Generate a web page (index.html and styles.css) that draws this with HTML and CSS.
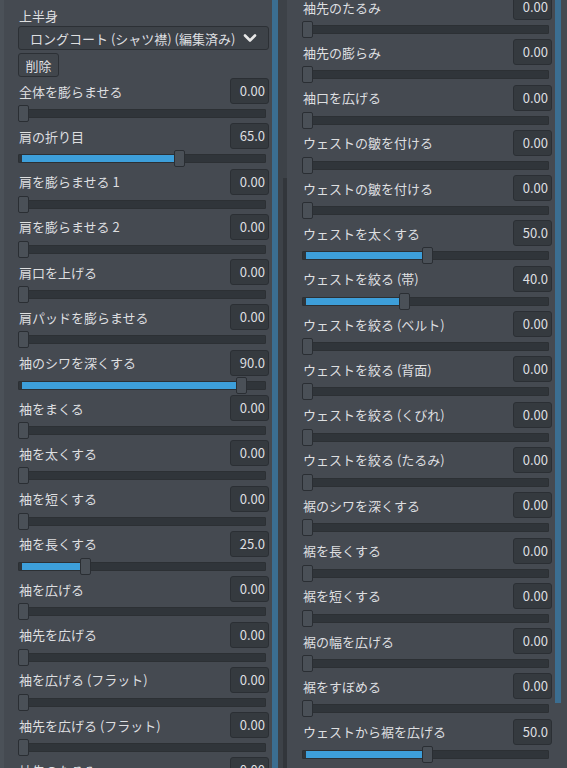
FILE: index.html
```html
<!DOCTYPE html>
<html lang="ja">
<head>
<meta charset="utf-8">
<link rel="stylesheet" href="styles.css">
</head>
<body>
<div class="app">
  <div class="edge"></div>
  <div class="panel left">
    <div class="section-title">上半身</div>
    <div class="dropdown"><span>ロングコート (シャツ襟) (編集済み)</span>
      <svg class="chev" width="14" height="10" viewBox="0 0 14 10"><path d="M2 2.5 L7 7.5 L12 2.5" fill="none" stroke="#e8e8e8" stroke-width="2.6" stroke-linecap="round" stroke-linejoin="round"/></svg>
    </div>
    <div class="btn">削除</div>
    <div class="rows">
      <div class="row"><div class="head"><span class="label">全体を膨らませる</span><span class="val">0.00</span></div><div class="slider"><div class="track"></div><div class="handle" style="--p:0"></div></div></div>
      <div class="row"><div class="head"><span class="label">肩の折り目</span><span class="val">65.0</span></div><div class="slider"><div class="track"></div><div class="fill" style="--p:0.66"></div><div class="handle" style="--p:0.66"></div></div></div>
      <div class="row"><div class="head"><span class="label">肩を膨らませる 1</span><span class="val">0.00</span></div><div class="slider"><div class="track"></div><div class="handle" style="--p:0"></div></div></div>
      <div class="row"><div class="head"><span class="label">肩を膨らませる 2</span><span class="val">0.00</span></div><div class="slider"><div class="track"></div><div class="handle" style="--p:0"></div></div></div>
      <div class="row"><div class="head"><span class="label">肩口を上げる</span><span class="val">0.00</span></div><div class="slider"><div class="track"></div><div class="handle" style="--p:0"></div></div></div>
      <div class="row"><div class="head"><span class="label">肩パッドを膨らませる</span><span class="val">0.00</span></div><div class="slider"><div class="track"></div><div class="handle" style="--p:0"></div></div></div>
      <div class="row"><div class="head"><span class="label">袖のシワを深くする</span><span class="val">90.0</span></div><div class="slider"><div class="track"></div><div class="fill" style="--p:0.92"></div><div class="handle" style="--p:0.92"></div></div></div>
      <div class="row"><div class="head"><span class="label">袖をまくる</span><span class="val">0.00</span></div><div class="slider"><div class="track"></div><div class="handle" style="--p:0"></div></div></div>
      <div class="row"><div class="head"><span class="label">袖を太くする</span><span class="val">0.00</span></div><div class="slider"><div class="track"></div><div class="handle" style="--p:0"></div></div></div>
      <div class="row"><div class="head"><span class="label">袖を短くする</span><span class="val">0.00</span></div><div class="slider"><div class="track"></div><div class="handle" style="--p:0"></div></div></div>
      <div class="row"><div class="head"><span class="label">袖を長くする</span><span class="val">25.0</span></div><div class="slider"><div class="track"></div><div class="fill" style="--p:0.26"></div><div class="handle" style="--p:0.26"></div></div></div>
      <div class="row"><div class="head"><span class="label">袖を広げる</span><span class="val">0.00</span></div><div class="slider"><div class="track"></div><div class="handle" style="--p:0"></div></div></div>
      <div class="row"><div class="head"><span class="label">袖先を広げる</span><span class="val">0.00</span></div><div class="slider"><div class="track"></div><div class="handle" style="--p:0"></div></div></div>
      <div class="row"><div class="head"><span class="label">袖を広げる (フラット)</span><span class="val">0.00</span></div><div class="slider"><div class="track"></div><div class="handle" style="--p:0"></div></div></div>
      <div class="row"><div class="head"><span class="label">袖先を広げる (フラット)</span><span class="val">0.00</span></div><div class="slider"><div class="track"></div><div class="handle" style="--p:0"></div></div></div>
      <div class="row"><div class="head"><span class="label">袖先のたるみ</span><span class="val">0.00</span></div><div class="slider"><div class="track"></div><div class="handle" style="--p:0"></div></div></div>
    </div>
  </div>
  <div class="vbar full"></div>
  <div class="gutter"><div class="thumb"></div></div>
  <div class="panel right">
    <div class="rows">
      <div class="row"><div class="head"><span class="label">袖先のたるみ</span><span class="val">0.00</span></div><div class="slider"><div class="track"></div><div class="handle" style="--p:0"></div></div></div>
      <div class="row"><div class="head"><span class="label">袖先の膨らみ</span><span class="val">0.00</span></div><div class="slider"><div class="track"></div><div class="handle" style="--p:0"></div></div></div>
      <div class="row"><div class="head"><span class="label">袖口を広げる</span><span class="val">0.00</span></div><div class="slider"><div class="track"></div><div class="handle" style="--p:0"></div></div></div>
      <div class="row"><div class="head"><span class="label">ウェストの皺を付ける</span><span class="val">0.00</span></div><div class="slider"><div class="track"></div><div class="handle" style="--p:0"></div></div></div>
      <div class="row"><div class="head"><span class="label">ウェストの皺を付ける</span><span class="val">0.00</span></div><div class="slider"><div class="track"></div><div class="handle" style="--p:0"></div></div></div>
      <div class="row"><div class="head"><span class="label">ウェストを太くする</span><span class="val">50.0</span></div><div class="slider"><div class="track"></div><div class="fill" style="--p:0.51"></div><div class="handle" style="--p:0.51"></div></div></div>
      <div class="row"><div class="head"><span class="label">ウェストを絞る (帯)</span><span class="val">40.0</span></div><div class="slider"><div class="track"></div><div class="fill" style="--p:0.41"></div><div class="handle" style="--p:0.41"></div></div></div>
      <div class="row"><div class="head"><span class="label">ウェストを絞る (ベルト)</span><span class="val">0.00</span></div><div class="slider"><div class="track"></div><div class="handle" style="--p:0"></div></div></div>
      <div class="row"><div class="head"><span class="label">ウェストを絞る (背面)</span><span class="val">0.00</span></div><div class="slider"><div class="track"></div><div class="handle" style="--p:0"></div></div></div>
      <div class="row"><div class="head"><span class="label">ウェストを絞る (くびれ)</span><span class="val">0.00</span></div><div class="slider"><div class="track"></div><div class="handle" style="--p:0"></div></div></div>
      <div class="row"><div class="head"><span class="label">ウェストを絞る (たるみ)</span><span class="val">0.00</span></div><div class="slider"><div class="track"></div><div class="handle" style="--p:0"></div></div></div>
      <div class="row"><div class="head"><span class="label">裾のシワを深くする</span><span class="val">0.00</span></div><div class="slider"><div class="track"></div><div class="handle" style="--p:0"></div></div></div>
      <div class="row"><div class="head"><span class="label">裾を長くする</span><span class="val">0.00</span></div><div class="slider"><div class="track"></div><div class="handle" style="--p:0"></div></div></div>
      <div class="row"><div class="head"><span class="label">裾を短くする</span><span class="val">0.00</span></div><div class="slider"><div class="track"></div><div class="handle" style="--p:0"></div></div></div>
      <div class="row"><div class="head"><span class="label">裾の幅を広げる</span><span class="val">0.00</span></div><div class="slider"><div class="track"></div><div class="handle" style="--p:0"></div></div></div>
      <div class="row"><div class="head"><span class="label">裾をすぼめる</span><span class="val">0.00</span></div><div class="slider"><div class="track"></div><div class="handle" style="--p:0"></div></div></div>
      <div class="row"><div class="head"><span class="label">ウェストから裾を広げる</span><span class="val">50.0</span></div><div class="slider"><div class="track"></div><div class="fill" style="--p:0.51"></div><div class="handle" style="--p:0.51"></div></div></div>
    </div>
  </div>
  <div class="vbar partial"></div>
  <div class="rest"></div>
</div>
</body>
</html>
```
FILE: styles.css
```css
* { box-sizing: border-box; }
html, body { margin: 0; padding: 0; }
body {
  width: 567px;
  height: 768px;
  overflow: hidden;
  background: #454a51;
  font-family: "Noto Sans CJK JP", "Noto Sans", sans-serif;
  font-size: 13px;
  color: #dedfe0;
}
.app {
  display: flex;
  height: 768px;
  overflow: hidden;
}
.edge {
  width: 4px;
  flex: none;
  background: #4b5158;
}
.panel {
  flex: none;
  overflow: hidden;
  height: 768px;
}
.panel.left {
  width: 268px;
  padding-left: 14px;
  padding-right: 3px;
}
.panel.right {
  width: 268px;
  padding-left: 15px;
  padding-right: 3px;
}
.section-title {
  height: 26px;
  line-height: 20px;
  padding-top: 6px;
  padding-left: 1px;
}
.dropdown {
  height: 24px;
  border: 1px solid #2c3035;
  border-radius: 3px;
  background: #3d4248;
  display: flex;
  align-items: center;
  justify-content: space-between;
  padding: 0 11px 0 11px;
}
.chev { display: block; }
.btn {
  margin-top: 3px;
  width: 41px;
  height: 24px;
  border: 1px solid #2c3035;
  border-radius: 3px;
  background: #41464c;
  display: flex;
  align-items: center;
  justify-content: center;
}
.rows {
  display: flex;
  flex-direction: column;
}
.panel.left .rows { margin-top: 1px; }
.panel.right .rows { margin-top: -6px; }
.row {
  height: 45.3px;
  flex: none;
  display: flex;
  flex-direction: column;
}
.head {
  height: 26px;
  display: flex;
  align-items: center;
  justify-content: space-between;
}
.label { padding-left: 1px; }
.val {
  width: 39px;
  height: 26px;
  border: 1px solid #2b2f34;
  border-radius: 3px;
  background: #353a3f;
  text-align: right;
  padding-right: 3px;
  line-height: 24px;
}
.slider {
  position: relative;
  height: 17px;
  margin-top: 1px;
  margin-right: 3px;
}
.track {
  position: absolute;
  left: 0;
  right: 0;
  top: 4px;
  height: 9px;
  background: #30353a;
  border: 1px solid #2c3034;
  border-radius: 1px;
}
.fill {
  position: absolute;
  left: 4px;
  top: 5px;
  height: 7px;
  width: calc(var(--p) * (100% - 11px));
  background: #3d9fda;
}
.handle {
  position: absolute;
  top: 0;
  left: calc(var(--p) * (100% - 11px));
  width: 11px;
  height: 17px;
  background: #4a5057;
  border: 1px solid #2a2e33;
  border-radius: 2px;
}
.vbar {
  flex: none;
  width: 6px;
  background: #3b6e91;
}
.vbar.full { height: 768px; }
.vbar.partial { height: 703px; }
.gutter {
  flex: none;
  width: 9px;
  height: 768px;
  background: #3d4248;
  display: flex;
  flex-direction: column;
  align-items: flex-end;
}
.thumb {
  margin-top: 178px;
  width: 4px;
  height: 590px;
  background: #32363b;
}
.rest { flex: 1; }
```
